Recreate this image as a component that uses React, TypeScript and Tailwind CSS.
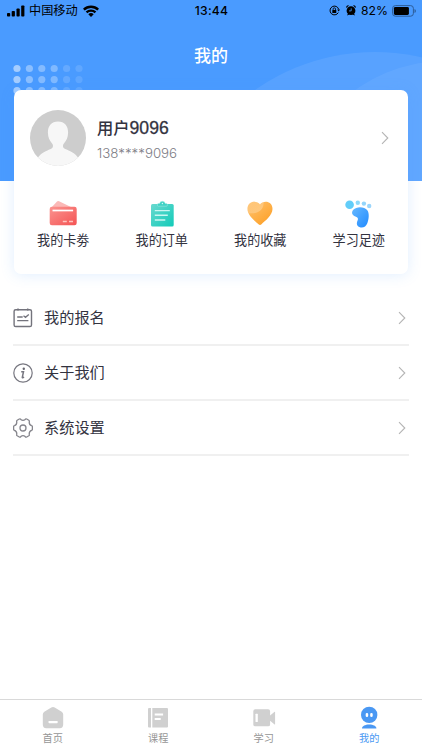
import React from 'react';

const font = "font-['Inter','Noto_Sans_CJK_SC',sans-serif]";

function Chevron({ className = '' }: { className?: string }) {
  return (
    <svg className={className} width="8" height="14" viewBox="0 0 8 14" fill="none" stroke="#b4b4b4" strokeWidth="1.1">
      <path d="M1 1.200 6.800 7 1 12.800" />
    </svg>
  );
}

function StatusBar() {
  return (
    <div className="flex h-[21px] items-center pl-[7px] pr-[6px] text-black">
      <div className="flex flex-1 items-center">
        <svg width="18" height="12" viewBox="0 0 18 12">
          <rect x="0" y="8" width="3.2" height="3.5" rx=".8" />
          <rect x="4.7" y="6" width="3.2" height="5.5" rx=".8" />
          <rect x="9.5" y="3.5" width="3.2" height="8" rx=".8" />
          <rect x="14.2" y="0.4" width="3.2" height="11.1" rx=".8" />
        </svg>
        <span className="ml-[4px] text-[12.2px] leading-[20px]">中国移动</span>
        <svg className="ml-[5px]" width="16" height="12" viewBox="0 0 16 12">
          <path d="M0 3.800a11.400 11.400 0 0 1 16 0l-1.700 1.800a9 9 0 0 0-12.600 0z" />
          <path d="M2.700 6.600a7.600 7.600 0 0 1 10.600 0l-1.700 1.700a5.200 5.200 0 0 0-7.200 0z" />
          <path d="M5.300 9.200a3.900 3.900 0 0 1 5.400 0L8 12z" />
        </svg>
      </div>
      <span className="text-[12.2px] font-medium leading-[20px] tracking-[0.2px]">13:44</span>
      <div className="flex flex-1 items-center justify-end">
        <svg width="11" height="11" viewBox="0 0 11 11" fill="none" stroke="#000">
          <path d="M9.300 7.600A4.400 4.400 0 1 1 9.700 4.400" />
          <path d="M8.200 4.500h2.800L9.700 6.400z" fill="#000" stroke="none" />
          <rect x="3.3" y="4.9" width="4" height="3" rx=".5" fill="#000" stroke="none" />
          <path d="M4.100 5V4a1.200 1.200 0 0 1 2.400 0v1" strokeWidth=".8" />
        </svg>
        <svg className="ml-[6px]" width="10" height="11" viewBox="0 0 10 11">
          <circle cx="5" cy="5.7" r="4.4" />
          <path d="M.3 2.900A1.900 1.900 0 0 1 3 .6zM9.700 2.900A1.900 1.900 0 0 0 7 .6zM1 10.600l1-2 1.500 1zM9 10.600l-1-2-1.500 1z" />
          <path d="M5.200 3.300v2.600H3" fill="none" stroke="#4a9bff" strokeWidth=".8" />
        </svg>
        <span className="ml-[5px] text-[12.2px] leading-[20px]">82%</span>
        <svg className="ml-[4px]" width="24" height="12" viewBox="0 0 24 12">
          <rect x=".6" y=".6" width="20.8" height="10.6" rx="2.8" fill="none" stroke="#2c5c98" strokeWidth="1" />
          <rect x="1.9" y="1.9" width="15" height="8" rx="1.4" />
          <path d="M22.500 4.100a2 2 0 0 1 0 3.800z" fill="#2c5c98" />
        </svg>
      </div>
    </div>
  );
}

const dotColumns = [0.5, 0.36, 0.32, 0.3, 0.15, 0.12];

function HeaderArt() {
  return (
    <svg className="absolute left-0 top-0 -z-10" width="422" height="181" viewBox="0 0 422 181">
      <rect width="422" height="181" fill="#4a9bff" />
      <circle cx="375" cy="260" r="208" fill="#fff" fillOpacity=".08" />
      <circle cx="445" cy="215" r="154" fill="#fff" fillOpacity=".06" />
      {dotColumns.map((opacity, col) =>
        [68.5, 79.6, 90.7].map((y) => (
          <circle key={`${col}-${y}`} cx={17 + col * 12.4} cy={y} r="3.6" fill="#fff" fillOpacity={opacity} />
        )),
      )}
    </svg>
  );
}

function Avatar() {
  return (
    <svg width="56" height="56" viewBox="0 0 56 56">
      <defs>
        <clipPath id="avatar"><circle cx="28" cy="28" r="28" /></clipPath>
      </defs>
      <g clipPath="url(#avatar)">
        <rect width="56" height="56" fill="#cdcdcd" />
        <path
          d="M28 11.500c6.400 0 10.300 4.500 10.100 11.200-.1 4.500-1.600 7.800-4 10.500-1.700 2-1.500 4.600 1.200 5.800 5.200 2.300 9.800 4.100 13 9V56H7.700v-8c3.200-4.900 7.800-6.700 13-9 2.700-1.200 2.900-3.800 1.200-5.800-2.400-2.700-3.900-6-4-10.500C17.700 16 21.600 11.500 28 11.500z"
          fill="#f7f7f7"
        />
      </g>
    </svg>
  );
}

function CardIcon() {
  return (
    <svg width="28" height="28" viewBox="0 0 28 28">
      <defs>
        <linearGradient id="red" x1="0" y1="0" x2="1" y2="1">
          <stop stopColor="#fb9490" /><stop offset="1" stopColor="#f45454" />
        </linearGradient>
      </defs>
      <path d="M1.500 8.500 7.800 1.700q1-1 2.300-.4L24 8z" fill="#fbb9b7" />
      <rect x=".7" y="6.7" width="27" height="18.6" rx="2.2" fill="url(#red)" />
      <path d="M3.500 10.500h20.600" stroke="#fff" strokeWidth="1.7" />
      <path d="M13.800 21.500h4M20 21.500h4" stroke="#ffc5bf" strokeWidth="1.5" />
    </svg>
  );
}

function OrderIcon() {
  return (
    <svg width="28" height="28" viewBox="0 0 28 28">
      <defs>
        <linearGradient id="teal" x1="0" y1="0" x2="1" y2="1">
          <stop stopColor="#69d9cf" /><stop offset="1" stopColor="#12cbb9" />
        </linearGradient>
      </defs>
      <rect x="3" y="4" width="22.7" height="22.5" rx="1.5" fill="url(#teal)" />
      <path d="M9.500 5.500V4.300q0-.8.900-.8h1.100a3 3 0 0 1 5.800 0h1.100q.9 0 .9.800v1.200q0 .7-.9.700h-8q-.9 0-.9-.7z" fill="#3fd2c5" stroke="#a8ece5" strokeWidth=".5" />
      <circle cx="14.4" cy="3.5" r=".7" fill="#d9f7f4" />
      <path d="M6.800 10.600h15M6.800 15.300h13M6.800 20h10.500" stroke="#cbf7f2" strokeWidth="1.4" />
    </svg>
  );
}

function HeartIcon() {
  return (
    <svg width="28" height="28" viewBox="0 0 28 28">
      <defs>
        <linearGradient id="heart" x1="0" y1="0" x2=".8" y2="1">
          <stop stopColor="#ffc779" /><stop offset="1" stopColor="#fd9d20" />
        </linearGradient>
        <linearGradient id="heartShine" x1="0" y1="0" x2="1" y2="1">
          <stop stopColor="#ffd49b" stopOpacity=".2" /><stop offset="1" stopColor="#ffe0b5" stopOpacity=".9" />
        </linearGradient>
        <clipPath id="heartClip"><path d="M14 4.500C17.200.2 26.500.7 26.500 9.100c0 6.400-7.500 11.900-11 15.200q-1.500 1.200-3 0C9 21 1.500 15.500 1.500 9.100 1.500.7 10.800.2 14 4.500z" /></clipPath>
      </defs>
      <g clipPath="url(#heartClip)">
        <rect width="28" height="28" fill="url(#heart)" />
        <path d="M0 0h14l3.500 2.200c.8 7-5.500 11.800-14 11.100L0 11z" fill="url(#heartShine)" opacity=".65" />
      </g>
    </svg>
  );
}

function FootIcon() {
  return (
    <svg width="28" height="28" viewBox="0 0 28 28">
      <defs>
        <linearGradient id="foot" x1="0" y1="0" x2="1" y2="1">
          <stop stopColor="#65b8ff" /><stop offset="1" stopColor="#228bff" />
        </linearGradient>
      </defs>
      <circle cx="4.6" cy="4.7" r="4.3" fill="#62cdf9" />
      <circle cx="12.8" cy="2.7" r="2.2" fill="#8dd9fa" />
      <circle cx="18.9" cy="3.6" r="2.2" fill="#94d5fb" />
      <circle cx="24.2" cy="6" r="2.2" fill="#9bd5fb" />
      <path d="M8.300 9.800C11.500 6.200 19.500 6.400 22.300 10.300c2.300 3 1.500 9.400 0 13-1.200 3-3.600 4.700-6.700 4.200-3.700-.6-4.500-3.700-3.100-6.700 1.100-2.500.3-3.700-2.100-4.400C7.100 15.500 6 12.300 8.300 9.800z" fill="url(#foot)" />
    </svg>
  );
}

function SignupIcon() {
  return (
    <svg width="20" height="20" viewBox="0 0 20 20" fill="none" stroke="#73737c" strokeWidth="1.4">
      <path d="M2.700 1.700Q1.100 1.700 1.100 3.300v13.600q0 1.600 1.600 1.600h14.200q1.600 0 1.600-1.600V3.300q0-1.600-1.600-1.600z" />
      <path d="M5 .4v2M14.700 .4v2" strokeWidth="1.5" />
      <path d="M4.200 9h5.500M4.200 12.700h11.200M10.500 7.700l2 1.600 3.300-2.900" strokeWidth="1.3" />
    </svg>
  );
}

function InfoIcon() {
  return (
    <svg width="20" height="20" viewBox="0 0 20 20" fill="none" stroke="#777780" strokeWidth="1.2">
      <circle cx="10" cy="10" r="9.2" />
      <circle cx="10.8" cy="5.7" r="1.2" fill="#66666f" stroke="none" />
      <path d="M8.200 8.700h2.300l-1.200 5.700q-.1.800 1.800-.2" strokeWidth="1.5" />
    </svg>
  );
}

function SettingsIcon() {
  return (
    <svg width="20" height="20" viewBox="0 0 20 20" fill="none" stroke="#85858c" strokeWidth="1.3" strokeLinejoin="round">
      <path d="M6.300 1q1-.5 1.500.4 2.200 1.800 4.400 0 .5-.9 1.500-.4l2.100 1.200q.8.500.5 1.400-.4 3.100 2.300 4 .8.200.8 1.100v2.600q0 .9-.8 1.100-2.700.9-2.300 4 .3.900-.5 1.400L13.700 19q-1 .5-1.500-.4-2.200-1.800-4.400 0-.5.900-1.500.4l-2.100-1.200q-.8-.5-.5-1.400.4-3.100-2.300-4-.8-.2-.8-1.100V8.700q0-.9.800-1.100 2.700-.9 2.300-4-.3-.9.500-1.400z" />
      <circle cx="10" cy="10" r="3" />
    </svg>
  );
}

const shortcuts = [
  { label: '我的卡劵', icon: <CardIcon /> },
  { label: '我的订单', icon: <OrderIcon /> },
  { label: '我的收藏', icon: <HeartIcon /> },
  { label: '学习足迹', icon: <FootIcon /> },
];

const menu = [
  { label: '我的报名', icon: <SignupIcon /> },
  { label: '关于我们', icon: <InfoIcon /> },
  { label: '系统设置', icon: <SettingsIcon /> },
];

const tabs = [
  {
    label: '首页',
    icon: (
      <svg width="24" height="24" viewBox="0 0 24 24">
        <path d="M10.300 1.500q1.700-1 3.400 0l7 4.300q1.500.9 1.500 2.700V18.500q0 3.700-3.400 3.700H5.200Q1.800 22.200 1.800 18.500V8.500q0-1.800 1.500-2.700z" fill="#d0d0d0" />
        <rect x="7.5" y="14.9" width="9.2" height="2.4" rx=".7" fill="#fff" />
      </svg>
    ),
  },
  {
    label: '课程',
    icon: (
      <svg width="24" height="24" viewBox="0 0 24 24">
        <path d="M3 2h2v19.400H3q-1 0-1-1V3q0-1 1-1zM6.300 2H21q1 0 1 1v17.400q0 1-1 1H6.300z" fill="#d0d0d0" />
        <path d="M8.700 8.400h8.400M8.700 13h6" stroke="#fff" strokeWidth="2" />
      </svg>
    ),
  },
  {
    label: '学习',
    icon: (
      <svg width="24" height="24" viewBox="0 0 24 24">
        <path d="M3.200 3.300h13q1.900 0 1.900 1.900v4.200l4.200-3.500q.8-.6.800.4v11.600q0 1-.8.400l-4.200-3.500v3.600q0 1.900-1.900 1.900h-13q-1.900 0-1.900-1.900V5.200q0-1.900 1.900-1.900z" fill="#d0d0d0" />
        <rect x="3.5" y="7.8" width="2.3" height="8.3" rx=".5" fill="#fff" />
      </svg>
    ),
  },
  {
    label: '我的',
    icon: (
      <svg width="24" height="24" viewBox="0 0 24 24" fill="#4a98f3">
        <circle cx="12.2" cy="8.9" r="8.2" />
        <path d="M5 22.400c0-2.300 3.100-3.900 7.200-3.900s7.200 1.600 7.200 3.900z" />
        <rect x="8.7" y="6.9" width="2.5" height="4" rx="1.2" fill="#fff" />
        <rect x="13.2" y="6.9" width="2.5" height="4" rx="1.2" fill="#fff" />
      </svg>
    ),
  },
];

export default function App() {
  return (
    <main className={`relative isolate flex h-[750px] w-[422px] flex-col overflow-hidden bg-white ${font}`}>
      <HeaderArt />
      <StatusBar />
      <h1 className="flex h-[69px] items-center justify-center pt-[1px] text-[17px] font-medium leading-[24px] text-white">我的</h1>

      <section className="mx-[14px] h-[184px] rounded-[7px] bg-white shadow-[0_1px_14px_rgba(74,155,255,0.17)]">
        <div className="flex items-center pl-[16px] pr-[19px] pt-[20px]">
          <Avatar />
          <div className="ml-[11px] flex-1 pt-[3px]">
            <div className="text-[16.3px] font-medium leading-[24px] text-[#33333f]">
              用户<span className="font-['Liberation_Sans'] text-[17.6px] font-normal [-webkit-text-stroke:0.3px_#33333f]">9096</span>
            </div>
            <div className="mt-[3px] text-[13.3px] font-light leading-[20px] text-[#7d7d85]">138****9096</div>
          </div>
          <Chevron />
        </div>
        <div className="mt-[34px] grid grid-cols-4">
          {shortcuts.map((item) => (
            <div key={item.label} className="flex flex-col items-center">
              {item.icon}
              <span className="mt-[2px] text-[13.1px] leading-[20px] text-[#33333f]">{item.label}</span>
            </div>
          ))}
        </div>
      </section>

      <ul className="mx-[13px] mt-[17px] flex-1">
        {menu.map((item) => (
          <li key={item.label} className="flex h-[55px] items-center border-b-2 border-[#f0f0f0] pr-[3px]">
            {item.icon}
            <span className="ml-[11px] flex-1 text-[15.2px] leading-[24px] text-[#33333f]">{item.label}</span>
            <Chevron />
          </li>
        ))}
      </ul>

      <nav className="grid h-[51px] grid-cols-4 border-t border-[#d9d9d9] pt-[6px]">
        {tabs.map((tab, i) => (
          <div key={tab.label} className={`flex flex-col items-center ${i === 3 ? 'text-[#4a98f3]' : 'text-[#969696]'}`}>
            {tab.icon}
            <span className="text-[10.2px] leading-[16px]">{tab.label}</span>
          </div>
        ))}
      </nav>
    </main>
  );
}
